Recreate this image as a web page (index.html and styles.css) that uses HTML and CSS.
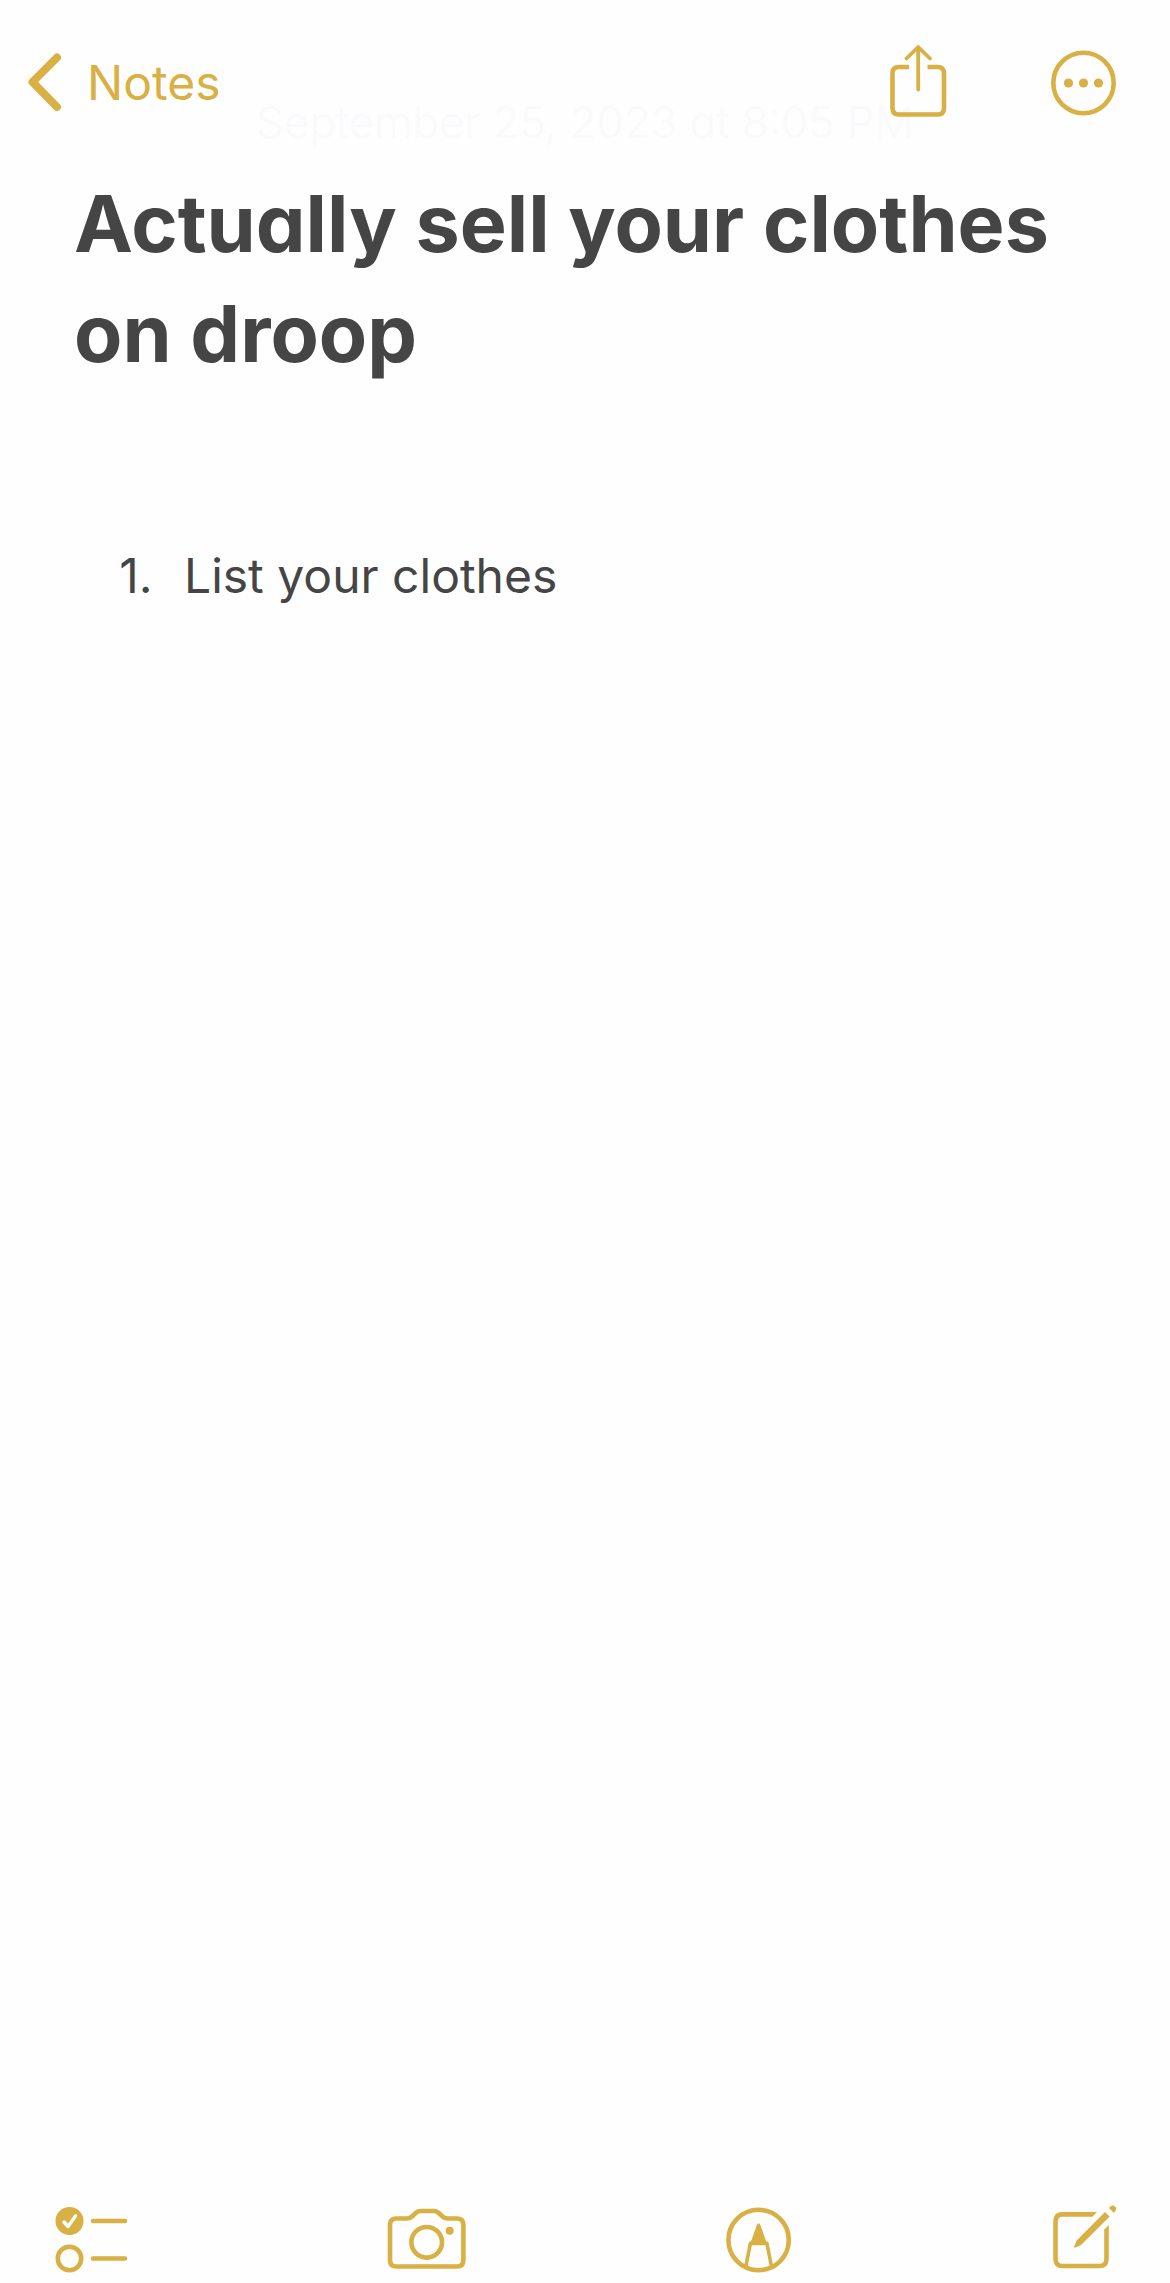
FILE: index.html
```html
<!DOCTYPE html>
<html lang="en">

<head>
    <meta charset="UTF-8" />
    <meta name="viewport" content="width=device-width, initial-scale=1" />
    <title>Notes</title>
    <link rel="stylesheet" href="styles.css">
</head>

<body>
    <header class="top-bar">
        <time class="note-date" datetime="2023-09-25T20:05">September 25, 2023 at 8:05 PM</time>
        <a href="#" class="back-link">
            <svg class="chevron" viewBox="0 0 36 80" aria-hidden="true">
                <path d="M30 14.5 L5.5 39 L30 64" stroke-width="8" />
            </svg>
            <span>Notes</span>
        </a>
        <div class="top-actions">
            <button type="button" aria-label="Share">
                <svg viewBox="0 0 80 80" aria-hidden="true">
                    <path d="M31 24 H21 Q14.5 24 14.5 30.5 V65 Q14.5 71.5 21 71.5 H59.5 Q66 71.5 66 65 V30.5 Q66 24 59.5 24 H49.5" stroke-linecap="butt" />
                    <path d="M40.2 46.5 V4.5 M28.5 15.5 L40.2 4 L52 15.5" stroke-width="3.8" />
                </svg>
            </button>
            <button type="button" aria-label="More">
                <svg viewBox="0 0 80 80" aria-hidden="true">
                    <circle cx="39.5" cy="40" r="30.2" />
                    <g class="solid">
                        <circle cx="24.5" cy="40" r="4.6" />
                        <circle cx="39.5" cy="40" r="4.6" />
                        <circle cx="54.5" cy="40" r="4.6" />
                    </g>
                </svg>
            </button>
        </div>
    </header>

    <main class="note">
        <h1>Actually sell your clothes on droop</h1>
        <ol>
            <li>List your clothes</li>
        </ol>
    </main>

    <footer class="bottom-bar">
        <button type="button" aria-label="Checklist">
            <svg viewBox="0 0 88 80" aria-hidden="true">
                <circle class="solid" cx="17.5" cy="22" r="14" />
                <path class="tick" d="M12 23 L16 27.5 L23.5 17" />
                <circle cx="17.5" cy="59.5" r="11.7" />
                <path d="M41 22 H73 M41 59.5 H73" />
            </svg>
        </button>
        <button type="button" aria-label="Camera">
            <svg viewBox="0 0 88 80" aria-hidden="true">
                <path d="M15.5 19.5 H26 Q29 19.5 31 17.5 L35 13.8 Q37 12 40 12 H52.5 Q55.5 12 57.5 13.8 L61.5 17.5 Q63.5 19.5 66.5 19.5 H76 Q82.4 19.5 82.4 26 V61 Q82.4 67.5 76 67.5 H15.5 Q9 67.5 9 61 V26 Q9 19.5 15.5 19.5 Z" />
                <circle cx="45.7" cy="43.3" r="15.3" />
                <circle class="solid" cx="68.7" cy="31.7" r="4" />
            </svg>
        </button>
        <button type="button" aria-label="Markup">
            <svg viewBox="0 0 88 80" aria-hidden="true">
                <circle cx="47.6" cy="41" r="30.2" />
                <path class="solid" d="M45.8 26 Q47.6 22.5 49.4 26 L55 42 Q58.6 43 57.5 46.2 H37.8 Q36.6 43 40.2 42 Z" />
                <path d="M39.3 45 L35 66.5 M56 45 L60.3 66.5" stroke-width="3.6" />
            </svg>
        </button>
        <button type="button" aria-label="New note">
            <svg viewBox="0 0 88 80" aria-hidden="true">
                <path d="M50 15.4 H22.5 Q15.5 15.4 15.5 22.4 V60 Q15.5 67 22.5 67 H59.5 Q66.5 67 66.5 60 V32" stroke-linecap="butt" />
                <path class="solid" d="M50 17.7 V13.1 H57 L52.4 17.7 Z M68.8 26 L64.2 30.6 V32 H68.8 Z" />
                <path class="solid" d="M34.6 48.8 Q33.8 48.6 34.2 47.6 L36.7 41.6 L65 12.9 L69.7 17.6 L41 46 L35.6 48.6 Z" />
                <path class="solid" d="M69 9 L70.3 7.6 Q72.9 5.4 75.1 7.6 Q77.2 9.8 75.1 12.3 L73.7 13.7 Z" />
            </svg>
        </button>
    </footer>
</body>

</html>
```
FILE: styles.css
```css
* {
    box-sizing: border-box;
}

body {
    margin: 0;
    min-height: 100vh;
    display: flex;
    flex-direction: column;
    font-family: Inter, "Liberation Sans", sans-serif;
    font-size: 48px;
    line-height: 64px;
    font-feature-settings: "cv11";
    color: #454545;
    background-color: #fefefe;
}

svg {
    display: block;
    width: 80px;
    height: 80px;
    fill: none;
    stroke: #d8b044;
    stroke-width: 4.6;
    stroke-linecap: round;
    stroke-linejoin: round;
}

svg .solid {
    fill: #d8b044;
    stroke: none;
}

svg .tick {
    stroke: #fefefe;
    stroke-width: 3.4;
}

button {
    padding: 0;
    border: none;
    background: none;
    cursor: pointer;
}

.top-bar {
    position: relative;
    display: flex;
    justify-content: space-between;
    align-items: center;
    height: 166px;
    padding: 0 46px 0 27px;
}

/* Date line, faded out behind the bar */
.note-date {
    position: absolute;
    top: 94px;
    left: 0;
    right: 0;
    text-align: center;
    font-size: 44px;
    line-height: 56px;
    font-weight: 300;
    color: #fafafd;
}

.back-link {
    position: relative;
    display: flex;
    align-items: center;
    gap: 24px;
    color: #d8b044;
    text-decoration: none;
}

.chevron {
    width: 36px;
}

.top-actions {
    position: relative;
    display: flex;
    gap: 86px;
}

.note {
    flex: 1;
    padding: 2px 74px 0;
}

h1 {
    margin: 0 0 156px;
    font-size: 79px;
    line-height: 110px;
    font-weight: 700;
}

ol {
    margin: 0;
    padding-left: 92px;
}

li {
    padding-left: 18px;
}

li::marker {
    font-variant-numeric: normal;
}

.bottom-bar {
    display: flex;
    justify-content: space-between;
    padding: 0 42px 4px 52px;
}

.bottom-bar svg {
    width: 88px;
}
```
